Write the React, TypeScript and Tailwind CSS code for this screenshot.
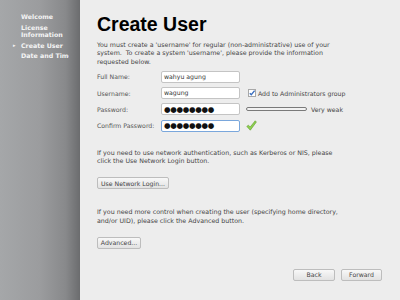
import React from 'react';

const FONT = { fontFamily: '"DejaVu Sans", "Liberation Sans", sans-serif' };

function Field({ label, children }: { label: string; children: React.ReactNode }) {
    return (
        <div className="flex items-center h-[12px]">
            <div className="w-[64px] text-[6.2px] text-[#555]">{label}</div>
            {children}
        </div>
    );
}

function Input({ value, focus = false, dots = false }: { value: string; focus?: boolean; dots?: boolean }) {
    return (
        <div
            className={`w-[79px] h-[12px] bg-white rounded-[2px] border flex items-center pl-[2px] overflow-hidden ${focus ? 'border-[#7aa7dc]' : 'border-[#c4c4c4]'}`}
        >
            {dots ? (
                <span className="text-[7.5px] leading-none text-[#111] tracking-[-0.3px]">{value}</span>
            ) : (
                <span className="text-[6.2px] leading-none text-[#333]">{value}</span>
            )}
        </div>
    );
}

function Button({ children, w }: { children: React.ReactNode; w: string }) {
    return (
        <div
            className={`${w} h-[12px] rounded-[2px] border border-[#bdbdbd] bg-gradient-to-b from-[#f8f8f8] to-[#e2e2e2] flex items-center justify-center text-[6.2px] text-[#444]`}
        >
            {children}
        </div>
    );
}

export default function App() {
    return (
        <div className="flex w-[400px] h-[300px] overflow-hidden bg-[#ededed]" style={FONT}>
            {/* sidebar */}
            <div className="w-[80px] h-full bg-[linear-gradient(to_right,#a5a7a9,#9b9c9e_50%,#88898b_82%,#6b6c6e)] shrink-0">
                <div className="pt-[13px] w-[69px] overflow-hidden flex flex-col gap-[3px] text-[6.3px] font-bold text-[#f4f4f4] leading-[7.5px] whitespace-nowrap">
                    <div className="pl-[21px]">Welcome</div>
                    <div className="pl-[21px]">License<br />Information</div>
                    <div className="relative pl-[21px]">
                        <span className="absolute left-[13px] text-[5px]">▸</span>
                        Create User
                    </div>
                    <div className="pl-[21px]">Date and Time</div>
                </div>
            </div>

            {/* main */}
            <div className="flex-1 flex flex-col pl-[17px] pr-[18px] text-[#444]">
                <h1 className="mt-[14px] text-[19.5px] leading-[20px] font-bold text-black" style={{ fontFamily: '"Liberation Sans", Arial, sans-serif' }}>
                    Create User
                </h1>
                <p className="mt-[7px] text-[6.3px] leading-[8.3px] whitespace-nowrap">
                    You must create a 'username' for regular (non-administrative) use of your<br />
                    system.&nbsp; To create a system 'username', please provide the information<br />
                    requested below.
                </p>

                <div className="mt-[5px] flex flex-col gap-[4.3px]">
                    <Field label="Full Name:">
                        <Input value="wahyu agung" />
                    </Field>
                    <Field label="Username:">
                        <Input value="wagung" />
                        <div className="ml-[8px] flex items-center gap-[2px] text-[6.2px]">
                            <svg width="8" height="8" viewBox="0 0 8 8">
                                <rect x="0.5" y="0.5" width="7" height="7" fill="#fff" stroke="#a8a8a8" />
                                <path d="M1.8 4.2 L3.3 5.8 L6.6 1.6" fill="none" stroke="#3b6fc0" strokeWidth="1.4" />
                            </svg>
                            <span>Add to Administrators group</span>
                        </div>
                    </Field>
                    <Field label="Password:">
                        <Input value="●●●●●●●●" dots />
                        <div className="ml-[6px] flex items-center gap-[4px] text-[6.2px]">
                            <div className="w-[61px] h-[4px] rounded-full border border-[#7a7a7a] bg-[#f2f2f2]" />
                            <span>Very weak</span>
                        </div>
                    </Field>
                    <Field label="Confirm Password:">
                        <Input value="●●●●●●●●" dots focus />
                        <svg className="ml-[6px]" width="11" height="11" viewBox="0 0 11 11">
                            <path d="M0.8 6.4 L2.4 5.2 L4.2 7 L9.2 0.8 L10.4 2 L4.3 10.2 Z" fill="#8fd14f" stroke="#5e9a2c" strokeWidth="0.6" strokeLinejoin="round" />
                        </svg>
                    </Field>
                </div>

                <p className="mt-[17px] text-[6.3px] leading-[8.3px] whitespace-nowrap">
                    If you need to use network authentication, such as Kerberos or NIS, please<br />
                    click the Use Network Login button.
                </p>
                <div className="mt-[12px]">
                    <Button w="w-[72px]">Use Network Login...</Button>
                </div>
                <p className="mt-[19px] text-[6.3px] leading-[8.3px] whitespace-nowrap">
                    If you need more control when creating the user (specifying home directory,<br />
                    and/or UID), please click the Advanced button.
                </p>
                <div className="mt-[12px]">
                    <Button w="w-[44px]">Advanced...</Button>
                </div>

                <div className="mt-[20px] flex justify-end gap-[6px]">
                    <Button w="w-[42px]">Back</Button>
                    <Button w="w-[41px]">Forward</Button>
                </div>
            </div>
        </div>
    );
}
